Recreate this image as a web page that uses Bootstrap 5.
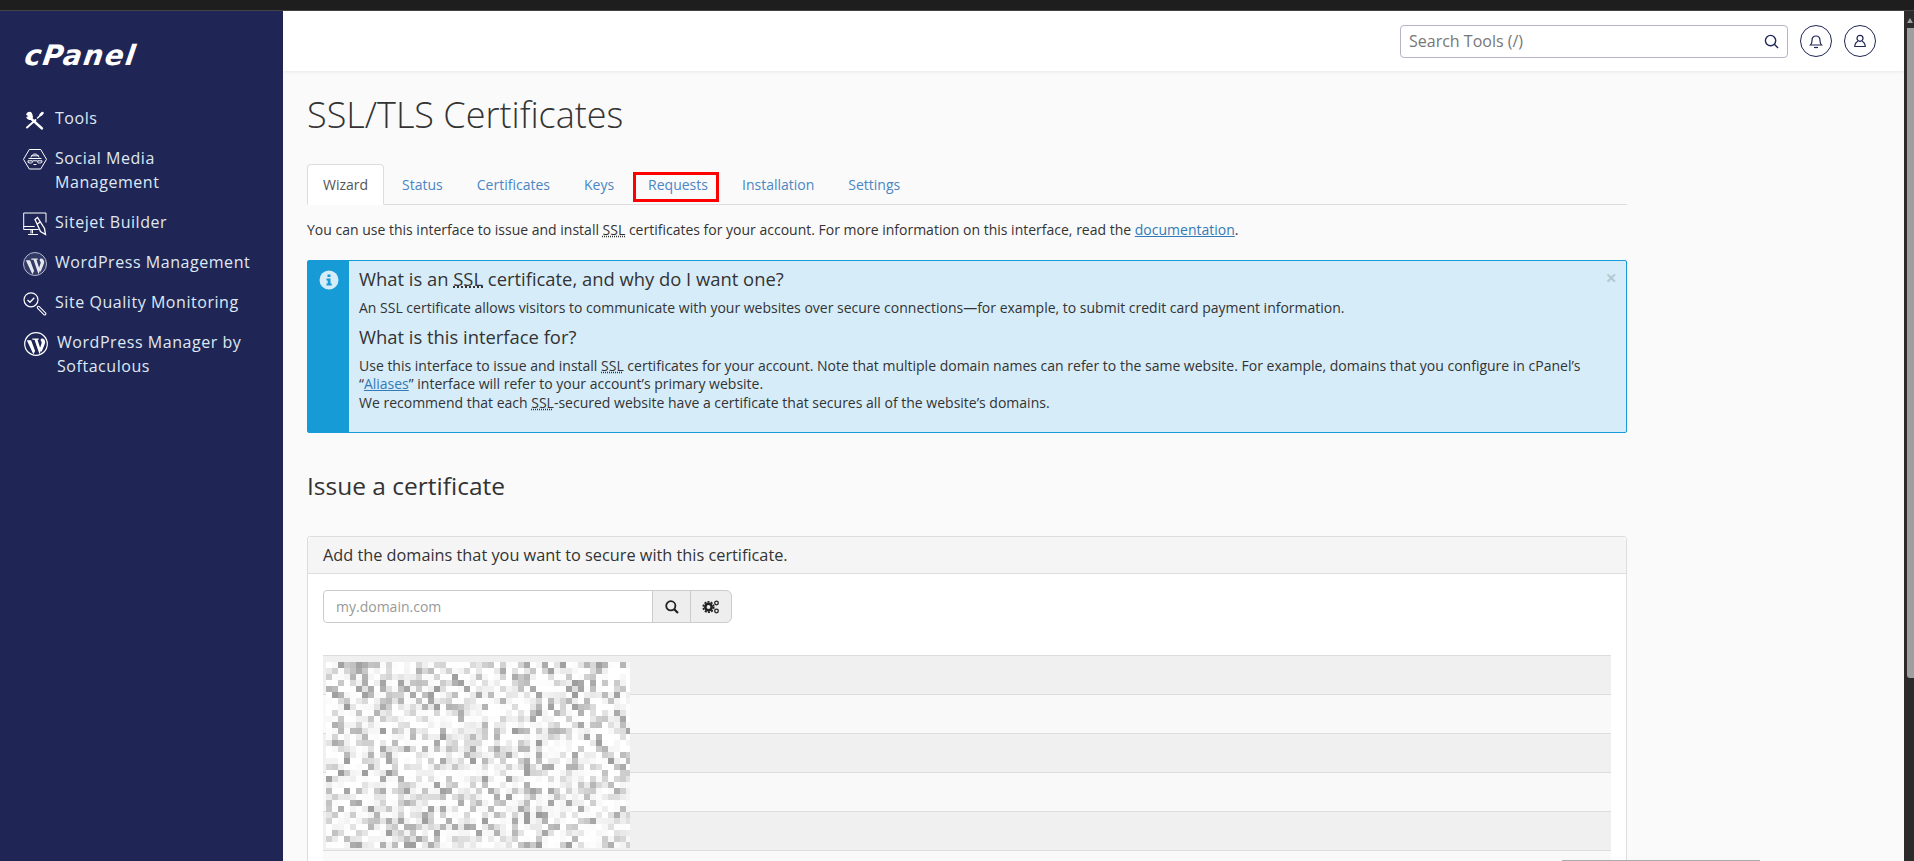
<!DOCTYPE html>
<html lang="en">
<head>
  <meta charset="UTF-8" />
  <meta name="viewport" content="width=device-width, initial-scale=1" />
  <title>SSL/TLS Certificates</title>
  <link href="https://cdn.jsdelivr.net/npm/bootstrap@5.3.0/dist/css/bootstrap.min.css" rel="stylesheet" />
  <style>
    body { font-family: "Open Sans", sans-serif; font-size: 14px; color: #333; background: #fafafa; }
    .top-strip { height: 11px; background: #1e1e1e; border-bottom: 1px solid #444; flex: none; }
    .side-rail { width: 283px; flex: none; background: #1f2655; color: #dfe8f3; padding: 31px 0 0 23px; }
    .cp-logo { font-family: "DejaVu Sans", sans-serif; font-weight: 700; font-style: italic; font-size: 28px; line-height: 27px; letter-spacing: 1.500px; color: #fff; margin-bottom: 29px; transform: skewX(-8deg); transform-origin: left bottom; }
    .side-item { display: flex; gap: 8px; padding: 8px 0; font-size: 16px; line-height: 24px; letter-spacing: .55px; color: #dfe8f3; text-decoration: none; }
    .side-item svg { flex: none; width: 24px; height: 24px; margin: 2px 0 -2px; }
    .side-item.shifted { padding-left: 1px; gap: 9px; }
    .top-head { height: 60px; background: #fff; box-shadow: 0 1px 3px rgba(0,0,0,.08); padding-right: 28px; flex: none; }
    .find-box { width: 388px; height: 33px; border: 1px solid #b5b5c9; border-radius: 4px; padding: 0 8px; font-size: 16px; color: #777; }
    .round-btn { width: 32px; height: 32px; border: 1px solid #1f2655; border-radius: 50%; }
    .page-body { padding: 0 24px; flex-grow: 1; min-height: 0; overflow: hidden; }
    .page-col { width: 1320px; }
    .page-title { font-size: 36px; font-weight: 300; line-height: 40px; margin: 24px 0 29px; color: #333; }
    .nav-tabs { --bs-nav-tabs-border-color: #ddd; --bs-nav-tabs-border-radius: 4px; --bs-nav-tabs-link-active-color: #555; --bs-nav-tabs-link-active-bg: #fff; --bs-nav-tabs-link-active-border-color: #ddd #ddd #fff; }
    .nav-tabs .nav-item { margin-right: 2px; }
    .nav-tabs .nav-link { padding: 9.500px 15px; font-size: 14px; line-height: 20px; color: #4a86c5; }
    .mark-red { position: relative; }
    .mark-red::after { content: ""; position: absolute; left: 0; top: 7px; width: 86px; height: 30px; border: 3px solid #f00; }
    .intro-line { margin: 15px 0 20px; line-height: 20px; }
    .intro-line a, .info-text a { color: #337ab7; }
    .info-box { border: 1px solid #179bd7; border-radius: 2px; background: #d6ecf9; height: 173px; }
    .info-side { width: 41px; flex: none; background: #179bd7; padding-top: 9px; }
    .info-text { padding: 5px 10px; }
    .info-text h4 { font-size: 18.400px; font-weight: 400; line-height: 26px; margin: 0 0 7px; }
    .info-text p { margin: 0 0 6px; line-height: 18.500px; }
    .info-x { position: absolute; top: 3px; right: 9px; font-size: 20px; font-weight: 700; line-height: 28px; color: #000; opacity: .15; }
    .issue-head { font-size: 24.500px; font-weight: 400; line-height: 30px; margin: 38px 0 35px; }
    .cert-card { --bs-card-border-color: #ddd; --bs-card-border-radius: 3px; --bs-card-cap-bg: #f5f5f5; --bs-card-cap-padding-y: 6.500px; --bs-card-cap-padding-x: 15px; }
    .cert-card .card-header { font-size: 16.300px; line-height: 23px; color: #333; }
    .cert-card .card-body { padding: 16px 15px 0; }
    .domain-group { width: 409px; height: 33px; }
    .domain-group .form-control { font-size: 14px; padding: 5px 12px; border-color: #ccc; border-radius: 4px 0 0 4px; }
    .domain-group .form-control::placeholder { color: #999; }
    .domain-group .btn { background: #eee; border-color: #ccc; padding: 0; display: flex; align-items: center; justify-content: center; }
    .btn-find { width: 39px; }
    .btn-gears { width: 42px; }
    .domain-table { margin: 32px 0 0; }
    .domain-table td { height: 39px; padding: 0; border-top: 1px solid #ddd; border-bottom: 0; }
    .domain-table tr:nth-child(odd) td { background: #f0f0f0; }
    .domain-table tr:nth-child(even) td { background: #f9f9f9; }
    .mosaic { position: absolute; left: 3px; top: 7px; width: 304px; height: 186px; }
    .scroll-rail { width: 10px; flex: none; background: #2b2b2b; padding-left: 3px; }
    .scroll-arrow { width: 0; height: 0; margin-top: 7px; border: 3.500px solid transparent; border-top-width: 0; border-bottom: 5px solid #9f9f9f; }
    .scroll-thumb { height: 650px; margin-top: 5px; background: #9f9f9f; border-radius: 0 0 0 3px; }
    .h-thumb { position: absolute; left: 1562px; bottom: 0; width: 198px; height: 1px; background: #aaa; }
  </style>
</head>
<body class="d-flex flex-column vh-100 overflow-hidden">
  <div class="top-strip"></div>
  <div class="d-flex flex-grow-1" style="min-height:0">
    <aside class="side-rail">
      <div class="cp-logo">cPanel</div>
      <a class="side-item" href="#">
        <svg viewBox="0 0 24 24" fill="none" stroke="#fff" stroke-linecap="round"><path d="M8.500 11 19 20.500" stroke-width="2.400"/><path d="M7.500 4.500C5.800 4 4 5 3.800 6.500L6 8 4 9.500c.8 1.800 3 2.500 4.500 1.500 1-1 1.200-2.500.5-3.800-.3-1.200-.8-2-1.500-2.700z" stroke-width="1.200" fill="#fff"/><path d="M4 19.500l8.500-7.500" stroke-width="1.900"/><path d="M14.500 10l3-2.800" stroke-width="1.400"/><path d="M17.500 7l2-2" stroke-width="2.500"/></svg>
        <span>Tools</span>
      </a>
      <a class="side-item" href="#">
        <svg viewBox="0 0 24 24" fill="none" stroke="#fff" stroke-width="1"><path d="M6.300 1.500h11.400l5.800 9.800-5.800 9.700H6.300L.5 11.300z"/><path d="M8 9.500c.3-2 2-3.500 4-3.500s3.700 1.500 4 3.500M8.500 7.800h7"/><path d="M5.500 10.500h13M5 12.800h4l.5 1.500c-.5 1-3.500 1-4.500 0zM15 12.800h4l-.2 1.500c-.8 1-3.800 1-4.300 0zM9.500 12.800h5M10.500 16.500h3"/></svg>
        <span>Social Media<br>Management</span>
      </a>
      <a class="side-item" href="#">
        <svg viewBox="0 0 24 24" fill="none" stroke="#fff" stroke-width="1"><path d="M23 10.500V1H.7v16.500h15"/><path d="M.7 14.500h11M9.500 17.500v4M8 17.500v4M5 22.500h10"/><path d="M12 7.500l2.500-2 7 11 1 6-5-3zM14.500 12l2.500-2" stroke-width="1.300"/></svg>
        <span>Sitejet Builder</span>
      </a>
      <a class="side-item" href="#">
        <svg viewBox="0 0 24 24"><circle cx="12" cy="12" r="11.500" fill="#343a66" stroke="#b4b9cc" stroke-width="1"/><path d="M2.800 8.200h4.300l4 10.800-1.700 3.200zM8.300 6.500h6.400v1.200h-1.200l3.500 10.800-1.500 3.700-5-14.500H8.300zM17.200 6.800c1.700-1 3.800.4 3.900 3 .1 1.300-.4 2.500-.9 3.700l-2.700 6.500-1.400-4.300 1.500-4.400c.3-1-.2-1.700-.6-2.300-.5-.6-.5-1.500.2-2.200z" fill="#e6e8ef"/></svg>
        <span>WordPress Management</span>
      </a>
      <a class="side-item" href="#">
        <svg viewBox="0 0 24 24" fill="none" stroke="#fff"><circle cx="8" cy="7.800" r="7" stroke-width="1.200"/><path d="M4.500 8l2.500 2.300 4.300-4.600" stroke-width="1.300"/><path d="M15.500 15.500l6.200 6.200" stroke-width="3.400" stroke-linecap="round"/><path d="M15.500 15.500l6.200 6.200" stroke="#1f2655" stroke-width="1.300" stroke-linecap="round"/></svg>
        <span>Site Quality Monitoring</span>
      </a>
      <a class="side-item shifted" href="#">
        <svg viewBox="0 0 24 24"><circle cx="12" cy="12" r="11.300" fill="#1f2655" stroke="#fff" stroke-width="1.200"/><path d="M2.800 8.200h4.300l4 10.800-1.700 3.200zM8.300 6.500h6.400v1.200h-1.200l3.500 10.800-1.500 3.700-5-14.500H8.300zM17.200 6.800c1.700-1 3.800.4 3.900 3 .1 1.300-.4 2.500-.9 3.700l-2.700 6.500-1.400-4.300 1.500-4.400c.3-1-.2-1.700-.6-2.300-.5-.6-.5-1.500.2-2.200z" fill="#fff"/></svg>
        <span>WordPress Manager by<br>Softaculous</span>
      </a>
    </aside>

    <div class="flex-grow-1 d-flex flex-column" style="min-width:0">
      <header class="top-head d-flex align-items-center justify-content-end gap-2">
        <div class="find-box d-flex align-items-center justify-content-between">
          <span>Search Tools (/)</span>
          <svg width="15" height="15" viewBox="0 0 16 16" fill="none" stroke="#1f2655" stroke-width="1.500"><circle cx="7" cy="7" r="5.500"/><path d="M11 11l4 4"/></svg>
        </div>
        <div class="round-btn d-flex align-items-center justify-content-center ms-1">
          <svg width="14" height="15" viewBox="0 0 14 15" fill="none" stroke="#1f2655" stroke-width="1.200"><path d="M1.500 11h11c-1-1-1.500-2-1.500-4.500C11 3.500 9.500 2 7 2S3 3.500 3 6.500C3 9 2.500 10 1.500 11z"/><path d="M5 13.500h4"/></svg>
        </div>
        <div class="round-btn d-flex align-items-center justify-content-center ms-1">
          <svg width="14" height="15" viewBox="0 0 14 15" fill="none" stroke="#1f2655" stroke-width="1.200"><circle cx="7" cy="4.300" r="3"/><path d="M5 7.200c-2 1-3.200 2.800-3.200 5.300h10.400c0-2.500-1.200-4.300-3.200-5.300"/></svg>
        </div>
      </header>

      <main class="page-body">
        <div class="page-col">
          <h1 class="page-title">SSL/TLS Certificates</h1>

          <ul class="nav nav-tabs">
            <li class="nav-item"><a class="nav-link active" href="#">Wizard</a></li>
            <li class="nav-item"><a class="nav-link" href="#">Status</a></li>
            <li class="nav-item"><a class="nav-link" href="#">Certificates</a></li>
            <li class="nav-item"><a class="nav-link" href="#">Keys</a></li>
            <li class="nav-item"><a class="nav-link mark-red" href="#">Requests</a></li>
            <li class="nav-item"><a class="nav-link" href="#">Installation</a></li>
            <li class="nav-item"><a class="nav-link" href="#">Settings</a></li>
          </ul>

          <p class="intro-line">You can use this interface to issue and install <abbr title="Secure Sockets Layer">SSL</abbr> certificates for your account. For more information on this interface, read the <a href="#">documentation</a>.</p>

          <div class="info-box d-flex position-relative">
            <div class="info-side d-flex justify-content-center align-items-start">
              <svg width="20" height="20" viewBox="0 0 20 20"><circle cx="10" cy="10" r="9.500" fill="#d6ecf9"/><path d="M8.500 4.500h3v2.500h-3zM7.500 8.500h4v5h1.200v2H7.500v-2h1.200v-3H7.500z" fill="#179bd7"/></svg>
            </div>
            <div class="info-text">
              <h4>What is an <abbr title="Secure Sockets Layer">SSL</abbr> certificate, and why do I want one?</h4>
              <p>An SSL certificate allows visitors to communicate with your websites over secure connections—for example, to submit credit card payment information.</p>
              <h4>What is this interface for?</h4>
              <p class="mb-0">Use this interface to issue and install <abbr title="Secure Sockets Layer">SSL</abbr> certificates for your account. Note that multiple domain names can refer to the same website. For example, domains that you configure in cPanel’s “<a href="#">Aliases</a>” interface will refer to your account’s primary website.<br>We recommend that each <abbr title="Secure Sockets Layer">SSL</abbr>-secured website have a certificate that secures all of the website’s domains.</p>
            </div>
            <span class="info-x">×</span>
          </div>

          <h2 class="issue-head">Issue a certificate</h2>

          <div class="card cert-card">
            <div class="card-header">Add the domains that you want to secure with this certificate.</div>
            <div class="card-body">
              <div class="input-group domain-group">
                <input type="text" class="form-control" placeholder="my.domain.com" />
                <button class="btn btn-find" type="button" aria-label="Search">
                  <svg width="14" height="14" viewBox="0 0 14 14" fill="none" stroke="#222" stroke-width="1.800"><circle cx="5.800" cy="5.800" r="4.600"/><path d="M9.200 9.200 13 13" stroke-width="2.200"/></svg>
                </button>
                <button class="btn btn-gears" type="button" aria-label="Settings">
                  <svg width="18" height="14" viewBox="0 0 18 14" fill="none" stroke="#222"><circle cx="6.500" cy="7" r="3.200" stroke-width="2.600"/><circle cx="6.500" cy="7" r="5.200" stroke-width="1.800" stroke-dasharray="2 1.270"/><circle cx="14.500" cy="3" r="1.800" stroke-width="1.300"/><circle cx="14.500" cy="11" r="1.800" stroke-width="1.300"/></svg>
                </button>
              </div>
              <div class="position-relative">
                <table class="table domain-table">
                  <tbody>
                    <tr><td></td></tr><tr><td></td></tr><tr><td></td></tr><tr><td></td></tr><tr><td></td></tr><tr><td></td></tr>
                  </tbody>
                </table>
                <svg class="mosaic" id="mosaic" viewBox="0 0 304 186" shape-rendering="crispEdges"></svg>
              </div>
            </div>
          </div>
        </div>
      </main>
    </div>

    <div class="scroll-rail"><div class="scroll-arrow"></div><div class="scroll-thumb"></div></div>
  </div>
  <div class="h-thumb"></div>

  <script src="https://cdn.jsdelivr.net/npm/bootstrap@5.3.0/dist/js/bootstrap.bundle.min.js"></script>
  <script>
    // blurred-out domain list, fixed seed so the picture is stable
    let seed = 41;
    function rnd() {
      seed = (seed * 16807) % 2147483647;
      return seed / 2147483647;
    }
    let cells = '<rect width="304" height="186" fill="#fff"/>';
    for (let y = 0; y < 31; y++) {
      for (let x = 0; x < 51; x++) {
        const v = Math.round(255 - Math.pow(rnd(), 2.8) * 100);
        cells += `<rect x="${x * 6}" y="${y * 6}" width="6" height="6" fill="rgb(${v},${v},${v})"/>`;
      }
    }
    document.getElementById('mosaic').innerHTML = cells;
  </script>
</body>
</html>
